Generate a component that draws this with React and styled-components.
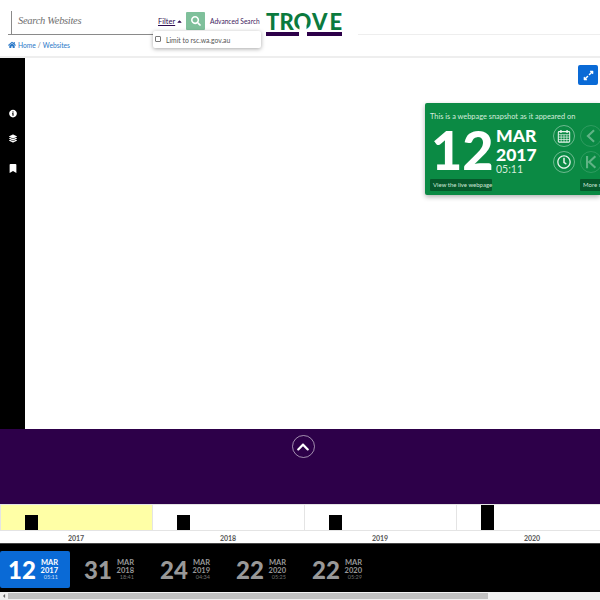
import React from 'react'
import styled, { createGlobalStyle } from 'styled-components'
import {
  FaHome, FaSearch, FaInfoCircle, FaLayerGroup, FaBookmark, FaExpandAlt,
  FaChevronUp, FaRegClock, FaCaretUp, FaCaretLeft,
} from 'react-icons/fa'

const sans = `Lato, "Noto Sans", sans-serif`

const GlobalStyle = createGlobalStyle`
  html, body { margin: 0; padding: 0; background: #fff; }
  * { box-sizing: border-box; }
`

const Page = styled.div`
  position: relative;
  width: 600px;
  height: 600px;
  overflow: hidden;
  display: flex;
  flex-direction: column;
  font-family: ${sans};
`

// Header
const Header = styled.header`
  height: 58px;
  flex: none;
  border-bottom: 2px solid #eeeeee;
  display: flex;
  flex-direction: column;
`
const TopRow = styled.div`
  height: 35px;
  display: flex;
  padding: 11px 0 0 8px;
`
const SearchBox = styled.div`
  width: 145px;
  height: 24px;
  border-bottom: 1px solid #8a8a8a;
  display: flex;
`
const SearchText = styled.div`
  height: 23px;
  margin-left: 3px;
  padding-left: 6px;
  border-left: 1px solid #8a8a8a;
  font: italic 10.5px/20px "Liberation Serif", serif;
  letter-spacing: -0.3px;
  color: #707070;
`
const FilterLink = styled.a`
  margin: 5px 0 0 5px;
  width: 28px;
  display: flex;
  align-items: center;
  height: 10px;
  gap: 1px;
  font-size: 7.5px;
  color: #2d0a4e;
  svg { width: 7px; height: 7px; }
  span { text-decoration: underline; }
`
const SearchButton = styled.button`
  width: 19px;
  height: 18px;
  margin-top: 1px;
  padding: 0;
  border: 0;
  border-radius: 1px;
  background: #7fc09b;
  color: #fff;
  display: flex;
  align-items: center;
  justify-content: center;
  svg { width: 10px; height: 10px; }
`
const AdvancedLink = styled.a`
  margin: 5px 0 0 5px;
  width: 50px;
  height: 10px;
  line-height: 10px;
  font-size: 6.6px;
  white-space: nowrap;
  color: #3c1a5c;
`
const LogoWrap = styled.div`
  margin: 1px 0 0 5px;
  width: 78px;
  height: 26px;
  svg { display: block; }
`
const Rule = styled.div`
  flex: 1;
  height: 24px;
  margin-left: 15px;
  border-bottom: 1px solid #eeeeee;
`
const Crumbs = styled.nav`
  display: flex;
  align-items: center;
  gap: 2px;
  padding: 5px 0 0 8px;
  font-size: 6.7px;
  line-height: 10px;
  color: #2a78c8;
  svg { width: 8px; height: 8px; }
  i { font-style: normal; color: #777; }
`
const Dropdown = styled.div`
  position: absolute;
  left: 153px;
  top: 31px;
  width: 108px;
  height: 17px;
  background: #fff;
  border-radius: 2px;
  box-shadow: 0 1px 4px rgba(0, 0, 0, 0.35);
  display: flex;
  align-items: center;
  padding-left: 2px;
  gap: 5px;
  font-size: 6.8px;
  color: #555;
`
const Check = styled.span`
  width: 6px;
  height: 6px;
  margin-bottom: 1px;
  border: 1px solid #777;
  border-radius: 1px;
`

// Main viewer
const Viewer = styled.main`
  flex: none;
  height: 371px;
  display: flex;
`
const SideBar = styled.aside`
  width: 25px;
  background: #000;
  color: #fff;
  display: flex;
  flex-direction: column;
  align-items: center;
  padding-top: 51px;
  svg { width: 8px; height: 9px; display: block; }
`
const SideItem = styled.div`
  height: ${p => p.$h}px;
`
const Frame = styled.div`
  flex: 1;
  background: #fff;
`
const ExpandButton = styled.button`
  position: absolute;
  left: 578px;
  top: 65px;
  width: 20px;
  height: 20px;
  padding: 0;
  border: 0;
  border-radius: 2px;
  background: #0a6ad6;
  color: #fff;
  display: flex;
  align-items: center;
  justify-content: center;
  svg { width: 11px; height: 11px; }
`

// Snapshot card
const Card = styled.section`
  position: absolute;
  left: 425px;
  top: 103px;
  width: 175px;
  height: 92px;
  padding: 9px 0 0 5px;
  background: #0b8a44;
  border-radius: 2px 0 0 2px;
  box-shadow: 0 2px 5px rgba(0, 0, 0, 0.3);
  color: #fff;
  overflow: hidden;
`
const CardTitle = styled.div`
  font-size: 7.4px;
  line-height: 9px;
  color: #d5ecdd;
  white-space: nowrap;
`
const CardBody = styled.div`
  display: flex;
  height: 51px;
  margin-top: 3px;
`
const BigDay = styled.div`
  flex: none;
  width: 66px;
  font-size: 54px;
  line-height: 51px;
  font-weight: 900;
  padding-left: 1px;
`
const BigDate = styled.div`
  flex: none;
  width: 57px;
  height: 51px;
  display: flex;
  flex-direction: column;
  padding-top: 2px;
  font-weight: 900;
  font-size: 17.5px;
  line-height: 19px;
  small {
    font-size: 10.5px;
    line-height: 10px;
    font-weight: 400;
    color: #d5ecdd;
  }
`
const CircleGrid = styled.div`
  flex: none;
  display: grid;
  grid-template-columns: 22px 22px;
  grid-auto-rows: 22px;
  gap: 4px 5px;
  padding-top: 1px;
`
const Circle = styled.div`
  border-radius: 50%;
  border: 1px solid ${p => (p.$dim ? 'rgba(255,255,255,0.15)' : 'rgba(255,255,255,0.4)')};
  display: flex;
  align-items: center;
  justify-content: center;
  color: ${p => (p.$dim ? 'rgba(255,255,255,0.35)' : '#e8f5ec')};
  svg { width: 14px; height: 14px; }
`
const CardActions = styled.div`
  display: flex;
  gap: 88px;
  margin-top: 4px;
`
const CardAction = styled.a`
  flex: none;
  width: 62px;
  height: 12px;
  padding: 0 3px;
  background: #06592b;
  border-radius: 1px;
  font-size: 6px;
  line-height: 12px;
  color: #cfe6d8;
  white-space: nowrap;
`

// Purple band
const Band = styled.div`
  flex: none;
  height: 75px;
  background: #2d0049;
  display: flex;
  justify-content: center;
  padding: 6px 0 0 6px;
`
const UpButton = styled.div`
  width: 23px;
  height: 23px;
  border-radius: 50%;
  border: 1px solid rgba(255, 255, 255, 0.55);
  color: #fff;
  display: flex;
  align-items: center;
  justify-content: center;
  svg { width: 14px; height: 14px; }
`

// Year timeline
const Timeline = styled.div`
  flex: none;
  height: 40px;
  display: flex;
  background: #fff;
  border-bottom: 1px solid #444;
`
const Year = styled.div`
  flex: none;
  width: 152px;
  display: flex;
  flex-direction: column;
`
const YearChart = styled.div`
  flex: none;
  height: 27px;
  display: flex;
  align-items: flex-end;
  padding-left: 24px;
  background: ${p => (p.$active ? '#ffffa6' : '#fff')};
  border: 1px solid #e4e4e4;
  border-width: 1px 0 1px 1px;
`
const Bar = styled.div`
  width: 13px;
  background: #000;
`
const YearLabel = styled.div`
  flex: 1;
  min-height: 0;
  text-align: center;
  font-size: 7px;
  line-height: 14px;
  font-weight: 700;
  color: #555;
`

// Snapshot strip
const Strip = styled.div`
  flex: none;
  height: 48px;
  background: #000;
  display: flex;
  gap: 6px;
  padding-top: 7px;
`
const Snap = styled.div`
  flex: none;
  width: 70px;
  height: 37px;
  padding-left: 8px;
  display: flex;
  border-radius: 2px;
  background: ${p => (p.$active ? '#0a6ad6' : 'transparent')};
  color: ${p => (p.$active ? '#fff' : '#999')};
`
const SnapDay = styled.div`
  width: 34px;
  font-size: 24px;
  line-height: 37px;
  font-weight: 900;
`
const SnapDate = styled.div`
  width: 16px;
  padding-top: 8px;
  display: flex;
  flex-direction: column;
  align-items: flex-end;
  font-size: 7.5px;
  line-height: 7.5px;
  font-weight: 700;
  small {
    font-size: 5.5px;
    line-height: 6px;
    font-weight: 400;
    opacity: 0.75;
  }
`

// Page scrollbar
const ScrollBar = styled.div`
  flex: none;
  height: 8px;
  background: #f1f1f1;
  display: flex;
  align-items: center;
  color: #666;
  svg { width: 8px; height: 6px; flex: none; }
`
const Thumb = styled.div`
  width: 480px;
  height: 6px;
  background: #c1c1c1;
`

const years = [
  { label: '2017', height: 15, active: true },
  { label: '2018', height: 15 },
  { label: '2019', height: 15 },
  { label: '2020', height: 25 },
]

const snaps = [
  { day: '12', year: '2017', time: '05:11', active: true },
  { day: '31', year: '2018', time: '18:41' },
  { day: '24', year: '2019', time: '04:34' },
  { day: '22', year: '2020', time: '05:25' },
  { day: '22', year: '2020', time: '05:29' },
]

const Logo = () => (
  <svg width="78" height="26" viewBox="0 0 78 26">
    <text x="1 14.5 28.5 47 64.5" y="18" fontFamily="Lato, sans-serif" fontWeight="900" fontSize="22" fill="#0b7a3e">TROVE</text>
    <rect x="34.5" y="11" width="7" height="8" fill="#fff" />
    <rect x="1" y="20" width="33" height="4" fill="#2d0049" />
    <rect x="42" y="20" width="35" height="4" fill="#2d0049" />
  </svg>
)

const CalendarGrid = () => (
  <svg viewBox="0 0 16 16" fill="none" stroke="currentColor">
    <rect x="1.5" y="3" width="13" height="12" rx="1" strokeWidth="1.2" />
    <path d="M1.5 6.5h13M1.5 9.25h13M1.5 12h13M4.75 6.5V15M8 6.5V15M11.25 6.5V15" strokeWidth="0.8" />
    <path d="M4.5 1v3.5M11.5 1v3.5" strokeWidth="1.6" />
  </svg>
)

const Back = () => (
  <svg viewBox="0 0 16 16" fill="none" stroke="currentColor" strokeWidth="2.4">
    <path d="M11.5 1.5L4.5 8l7 6.5" />
  </svg>
)

const StepBack = () => (
  <svg viewBox="0 0 16 16" fill="none" stroke="currentColor" strokeWidth="2.4">
    <path d="M3.5 1v14M13 1.5L6 8l7 6.5" />
  </svg>
)

const App = () => (
  <Page>
    <GlobalStyle />
    <Header>
      <TopRow>
        <SearchBox><SearchText>Search Websites</SearchText></SearchBox>
        <FilterLink><span>Filter</span><FaCaretUp /></FilterLink>
        <SearchButton><FaSearch /></SearchButton>
        <AdvancedLink>Advanced Search</AdvancedLink>
        <LogoWrap><Logo /></LogoWrap>
        <Rule />
      </TopRow>
      <Crumbs>
        <FaHome />
        <span>Home</span>
        <i>/</i>
        <span>Websites</span>
      </Crumbs>
    </Header>
    <Dropdown><Check />Limit to rsc.wa.gov.au</Dropdown>

    <Viewer>
      <SideBar>
        <SideItem $h={25}><FaInfoCircle /></SideItem>
        <SideItem $h={30}><FaLayerGroup /></SideItem>
        <SideItem $h={10}><FaBookmark /></SideItem>
      </SideBar>
      <Frame />
    </Viewer>
    <ExpandButton><FaExpandAlt /></ExpandButton>

    <Card>
      <CardTitle>This is a webpage snapshot as it appeared on</CardTitle>
      <CardBody>
        <BigDay>12</BigDay>
        <BigDate>
          <span>MAR</span>
          <span>2017</span>
          <small>05:11</small>
        </BigDate>
        <CircleGrid>
          <Circle><CalendarGrid /></Circle>
          <Circle $dim><Back /></Circle>
          <Circle><FaRegClock /></Circle>
          <Circle $dim><StepBack /></Circle>
        </CircleGrid>
      </CardBody>
      <CardActions>
        <CardAction>View the live webpage</CardAction>
        <CardAction>More snapshots</CardAction>
      </CardActions>
    </Card>

    <Band><UpButton><FaChevronUp /></UpButton></Band>

    <Timeline>
      {years.map(y => (
        <Year key={y.label}>
          <YearChart $active={y.active}>
            <Bar style={{ height: y.height }} />
          </YearChart>
          <YearLabel>{y.label}</YearLabel>
        </Year>
      ))}
    </Timeline>

    <Strip>
      {snaps.map(s => (
        <Snap key={s.time} $active={s.active}>
          <SnapDay>{s.day}</SnapDay>
          <SnapDate>
            <span>MAR</span>
            <span>{s.year}</span>
            <small>{s.time}</small>
          </SnapDate>
        </Snap>
      ))}
    </Strip>

    <ScrollBar>
      <FaCaretLeft />
      <Thumb />
    </ScrollBar>
  </Page>
)

export default App
